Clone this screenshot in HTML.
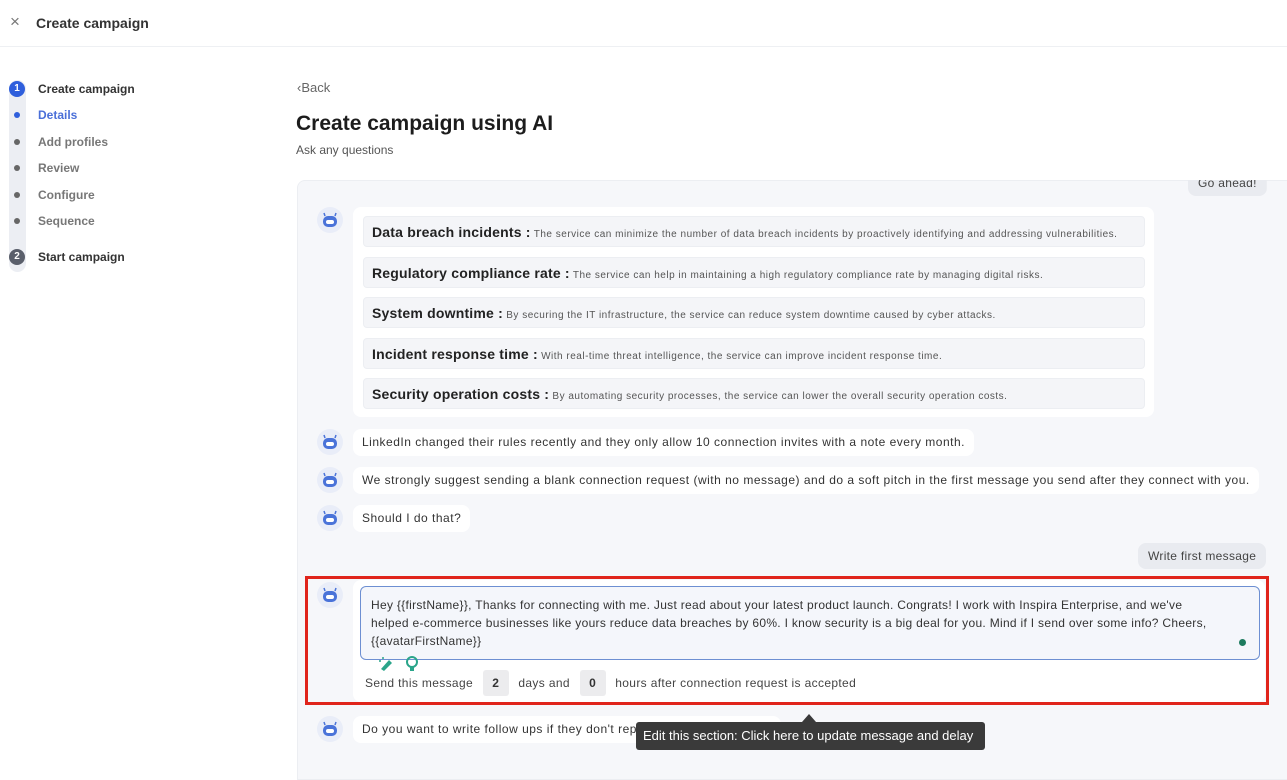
<!DOCTYPE html>
<html><head><style>
*{box-sizing:border-box;margin:0;padding:0}
body{width:1287px;height:752px;overflow:hidden;background:#fff;font-family:"Liberation Sans",sans-serif;color:#222;position:relative}
.abs{position:absolute}
.hdr{left:0;top:0;width:1287px;height:47px;border-bottom:1px solid #eef0f3}
.track{left:9px;top:80px;width:17px;height:192px;background:#eceef3;border-radius:9px}
.circ{width:16px;height:16px;border-radius:50%;color:#fff;font-size:10px;font-weight:bold;text-align:center;line-height:16px}
.dot{width:6px;height:6px;border-radius:50%;background:#666}
.sl{font-size:12px;color:#777;font-weight:bold}
.panel{left:297px;top:180px;width:1000px;height:600px;background:#f6f7fa;border:1px solid #eceef2;border-radius:8px 0 0 0;overflow:hidden}
.bub{background:#fff;border-radius:8px;font-size:12px;color:#333;padding:0 9px;line-height:27px;white-space:nowrap;letter-spacing:0.5px}
.item{left:363px;width:782px;height:31px;background:#f4f5f8;border:1px solid #eceef2;border-radius:4px;padding-left:8px;font-size:10px;color:#555;line-height:30px;white-space:nowrap;letter-spacing:0.5px}
.item b{font-size:14px;color:#222;letter-spacing:0.2px}
.ubub{background:#e9ebf0;border-radius:8px;font-size:12px;color:#444;padding:0 10px;line-height:26px;white-space:nowrap;letter-spacing:0.3px}
.num{display:inline-block;width:26px;height:26px;background:#ececee;border-radius:3px;text-align:center;line-height:26px;font-weight:bold;margin:0 6px;color:#333}
</style></head><body>
<div class="abs hdr"></div>
<div class="abs" style="left:10px;top:12px;font-size:17px;color:#777">×</div>
<div class="abs" style="left:36px;top:15px;font-size:14px;font-weight:bold;color:#333">Create campaign</div>

<div class="abs track"></div>
<div class="abs circ" style="left:9px;top:81px;background:#2f5fdc">1</div>
<div class="abs" style="left:38px;top:82px;font-size:12px;font-weight:bold;color:#333">Create campaign</div>
<div class="abs dot" style="left:14px;top:112px;background:#2f5fdc"></div>
<div class="abs sl" style="left:38px;top:108px;color:#4a6fd8">Details</div>
<div class="abs dot" style="left:14px;top:139px"></div>
<div class="abs sl" style="left:38px;top:135px">Add profiles</div>
<div class="abs dot" style="left:14px;top:165px"></div>
<div class="abs sl" style="left:38px;top:161px">Review</div>
<div class="abs dot" style="left:14px;top:192px"></div>
<div class="abs sl" style="left:38px;top:188px">Configure</div>
<div class="abs dot" style="left:14px;top:218px"></div>
<div class="abs sl" style="left:38px;top:214px">Sequence</div>
<div class="abs circ" style="left:9px;top:249px;background:#5a5f6b">2</div>
<div class="abs" style="left:38px;top:250px;font-size:12px;font-weight:bold;color:#333">Start campaign</div>

<div class="abs" style="left:297px;top:80px;font-size:13px;color:#666">‹Back</div>
<div class="abs" style="left:296px;top:112px;font-size:21px;font-weight:bold;color:#1c1c1c">Create campaign using AI</div>
<div class="abs" style="left:296px;top:143px;font-size:12px;color:#555">Ask any questions</div>

<div class="abs panel"></div>
<div class="abs ubub" style="left:1188px;top:170px;height:26px;clip-path:inset(10px 0 0 0)">Go ahead!</div>

<div class="abs" style="left:353px;top:207px;width:801px;height:210px;background:#fff;border-radius:8px"></div>
<div class="abs item" style="top:216px"><b>Data breach incidents :</b> The service can minimize the number of data breach incidents by proactively identifying and addressing vulnerabilities.</div>
<div class="abs item" style="top:257px"><b>Regulatory compliance rate :</b> The service can help in maintaining a high regulatory compliance rate by managing digital risks.</div>
<div class="abs item" style="top:297px"><b>System downtime :</b> By securing the IT infrastructure, the service can reduce system downtime caused by cyber attacks.</div>
<div class="abs item" style="top:338px"><b>Incident response time :</b> With real-time threat intelligence, the service can improve incident response time.</div>
<div class="abs item" style="top:378px"><b>Security operation costs :</b> By automating security processes, the service can lower the overall security operation costs.</div>

<div class="abs bub" style="left:353px;top:429px">LinkedIn changed their rules recently and they only allow 10 connection invites with a note every month.</div>
<div class="abs bub" style="left:353px;top:467px">We strongly suggest sending a blank connection request (with no message) and do a soft pitch in the first message you send after they connect with you.</div>
<div class="abs bub" style="left:353px;top:505px">Should I do that?</div>
<div class="abs ubub" style="left:1138px;top:543px">Write first message</div>

<div class="abs" style="left:353px;top:580px;width:912px;height:122px;background:#fff;border-radius:8px"></div>
<div class="abs" style="left:360px;top:586px;width:900px;height:74px;background:#f4f6fb;border:1.5px solid #6d8fd2;border-radius:6px;padding:9px 10px;font-size:12px;line-height:18px;color:#333;letter-spacing:0.3px;white-space:nowrap">Hey {{firstName}}, Thanks for connecting with me. Just read about your latest product launch. Congrats! I work with Inspira Enterprise, and we've<br>helped e-commerce businesses like yours reduce data breaches by 60%. I know security is a big deal for you. Mind if I send over some info? Cheers,<br>{{avatarFirstName}}</div>
<div class="abs" style="left:1239px;top:639px;width:7px;height:7px;border-radius:50%;background:#1c7a5e"></div>
<svg class="abs" style="left:376px;top:655px" width="44" height="18"><path d="M5 14 L13 5 L16 8 L8 16 Z" fill="#2aa58a"/><circle cx="4" cy="6" r="1" fill="#2aa58a"/><circle cx="7" cy="3" r="1" fill="#2aa58a"/><circle cx="36" cy="7" r="5" fill="none" stroke="#2aa58a" stroke-width="2"/><rect x="34" y="12" width="4" height="4" fill="#2aa58a"/></svg>
<div class="abs" style="left:365px;top:670px;font-size:12px;color:#444;line-height:26px;letter-spacing:0.35px">Send this message <span class="num">2</span> days and <span class="num">0</span> hours after connection request is accepted</div>
<div class="abs" style="left:305px;top:576px;width:964px;height:129px;border:3px solid #e0241b"></div>

<div class="abs bub" style="left:353px;top:716px">Do you want to write follow ups if they don't reply to the first message?</div>
<div class="abs" style="left:802px;top:714px;width:0;height:0;border-left:7px solid transparent;border-right:7px solid transparent;border-bottom:8px solid #3a3a3a"></div>
<div class="abs" style="left:636px;top:722px;width:349px;height:28px;background:#3a3a3a;border-radius:3px;color:#fff;font-size:13px;line-height:28px;padding-left:7px">Edit this section: Click here to update message and delay</div>

<svg class="abs" style="left:317px;top:207px" width="26" height="26"><circle cx="13" cy="13" r="13" fill="#e9edf8"/><rect x="6" y="9" width="14" height="11" rx="5" fill="#4a73d9"/><rect x="9" y="13" width="8" height="4" rx="2" fill="#fff"/><line x1="7" y1="6" x2="8" y2="9" stroke="#4a73d9" stroke-width="1.5"/><line x1="19" y1="6" x2="18" y2="9" stroke="#4a73d9" stroke-width="1.5"/></svg>
<svg class="abs" style="left:317px;top:429px" width="26" height="26"><circle cx="13" cy="13" r="13" fill="#e9edf8"/><rect x="6" y="9" width="14" height="11" rx="5" fill="#4a73d9"/><rect x="9" y="13" width="8" height="4" rx="2" fill="#fff"/><line x1="7" y1="6" x2="8" y2="9" stroke="#4a73d9" stroke-width="1.5"/><line x1="19" y1="6" x2="18" y2="9" stroke="#4a73d9" stroke-width="1.5"/></svg>
<svg class="abs" style="left:317px;top:467px" width="26" height="26"><circle cx="13" cy="13" r="13" fill="#e9edf8"/><rect x="6" y="9" width="14" height="11" rx="5" fill="#4a73d9"/><rect x="9" y="13" width="8" height="4" rx="2" fill="#fff"/><line x1="7" y1="6" x2="8" y2="9" stroke="#4a73d9" stroke-width="1.5"/><line x1="19" y1="6" x2="18" y2="9" stroke="#4a73d9" stroke-width="1.5"/></svg>
<svg class="abs" style="left:317px;top:505px" width="26" height="26"><circle cx="13" cy="13" r="13" fill="#e9edf8"/><rect x="6" y="9" width="14" height="11" rx="5" fill="#4a73d9"/><rect x="9" y="13" width="8" height="4" rx="2" fill="#fff"/><line x1="7" y1="6" x2="8" y2="9" stroke="#4a73d9" stroke-width="1.5"/><line x1="19" y1="6" x2="18" y2="9" stroke="#4a73d9" stroke-width="1.5"/></svg>
<svg class="abs" style="left:317px;top:582px" width="26" height="26"><circle cx="13" cy="13" r="13" fill="#e9edf8"/><rect x="6" y="9" width="14" height="11" rx="5" fill="#4a73d9"/><rect x="9" y="13" width="8" height="4" rx="2" fill="#fff"/><line x1="7" y1="6" x2="8" y2="9" stroke="#4a73d9" stroke-width="1.5"/><line x1="19" y1="6" x2="18" y2="9" stroke="#4a73d9" stroke-width="1.5"/></svg>
<svg class="abs" style="left:317px;top:716px" width="26" height="26"><circle cx="13" cy="13" r="13" fill="#e9edf8"/><rect x="6" y="9" width="14" height="11" rx="5" fill="#4a73d9"/><rect x="9" y="13" width="8" height="4" rx="2" fill="#fff"/><line x1="7" y1="6" x2="8" y2="9" stroke="#4a73d9" stroke-width="1.5"/><line x1="19" y1="6" x2="18" y2="9" stroke="#4a73d9" stroke-width="1.5"/></svg>
</body></html>
